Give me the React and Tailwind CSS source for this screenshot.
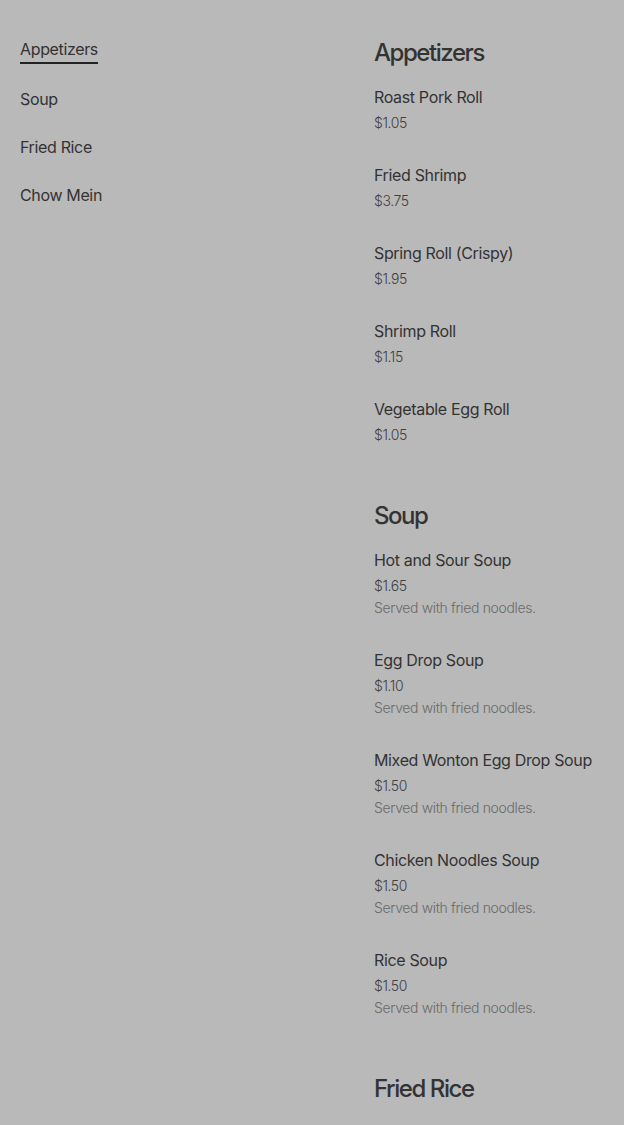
import React from 'react';

const menu = [
  {
    id: 'appetizers',
    title: 'Appetizers',
    items: [
      { name: 'Roast Pork Roll', price: '$1.05' },
      { name: 'Fried Shrimp', price: '$3.75' },
      { name: 'Spring Roll (Crispy)', price: '$1.95' },
      { name: 'Shrimp Roll', price: '$1.15' },
      { name: 'Vegetable Egg Roll', price: '$1.05' },
    ],
  },
  {
    id: 'soup',
    title: 'Soup',
    items: [
      { name: 'Hot and Sour Soup', price: '$1.65', note: 'Served with fried noodles.' },
      { name: 'Egg Drop Soup', price: '$1.10', note: 'Served with fried noodles.' },
      { name: 'Mixed Wonton Egg Drop Soup', price: '$1.50', note: 'Served with fried noodles.' },
      { name: 'Chicken Noodles Soup', price: '$1.50', note: 'Served with fried noodles.' },
      { name: 'Rice Soup', price: '$1.50', note: 'Served with fried noodles.' },
    ],
  },
  {
    id: 'fried-rice',
    title: 'Fried Rice',
    items: [
      { name: 'Roast Pork Fried Rice', price: '$4.25' },
      { name: 'Chicken Fried Rice', price: '$4.25' },
      { name: 'Shrimp Fried Rice', price: '$4.75' },
    ],
  },
  {
    id: 'chow-mein',
    title: 'Chow Mein',
    items: [
      { name: 'Chicken Chow Mein', price: '$4.50' },
      { name: 'Shrimp Chow Mein', price: '$4.95' },
    ],
  },
];

const Item = ({ name, price, note }) => (
  <div className="pb-[30px]">
    <p className="text-[16px] leading-6 tracking-[-0.022em] text-[#333]">{name}</p>
    <p className="mt-[4px] text-[14px] leading-5 font-light tracking-[-0.03em] text-[#3f3f3f]">{price}</p>
    {note && (
      <p className="mt-[2px] text-[14px] leading-5 font-light tracking-[-0.025em] text-[#6a6a6a]">{note}</p>
    )}
  </div>
);

export default function App() {
  return (
    <div
      className="min-h-screen bg-[#b9b9b9] px-5 pt-[37px] flex"
      style={{ fontFamily: 'Inter, "Noto Sans", sans-serif' }}
    >
      {/* category nav */}
      <nav className="w-[354px] shrink-0">
        <ul className="flex flex-col items-start gap-6 text-[16px] leading-6 tracking-[-0.022em] text-[#333]">
          {menu.map((s, i) => (
            <li key={s.id} className={i === 0 ? '-mb-px' : ''}>
              <a className={i === 0 ? 'block border-b-2 border-[#222] pb-px' : 'block'}>{s.title}</a>
            </li>
          ))}
        </ul>
      </nav>

      {/* menu sections */}
      <main className="flex-1">
        {menu.map((s) => (
          <section key={s.id} className="mb-[25px]">
            <h2 className="text-[24px] leading-8 font-medium tracking-[-0.06em] text-[#333] mb-4">{s.title}</h2>
            {s.items.map((it) => (
              <Item key={it.name} {...it} />
            ))}
          </section>
        ))}
      </main>
    </div>
  );
}
